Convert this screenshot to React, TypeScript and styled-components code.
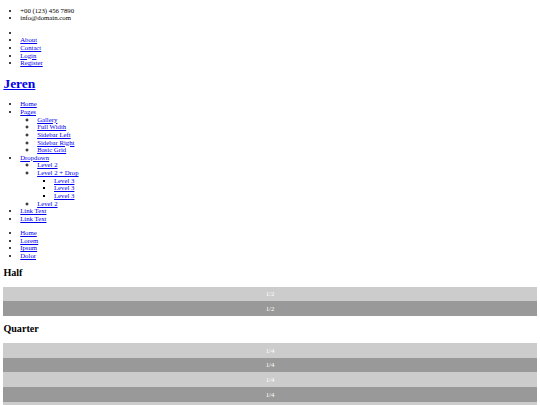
import React from "react";
import styled, { createGlobalStyle } from "styled-components";

const Global = createGlobalStyle`
  body {
    margin: 0 3.375px 3.375px;
    font-family: "Liberation Serif", "Times New Roman", serif;
    font-size: 6.75px;
    line-height: 7.62px;
    color: #000;
    background: #fff;
  }
`;

const List = styled.ul`
  margin: 6.75px 0;
  padding-left: 16.875px;
`;

const SubList = styled.ul<{ $marker: "circle" | "square" }>`
  margin: 0;
  padding-left: 16.875px;
  list-style-type: ${(p) => p.$marker};
`;

const Item = styled.li``;

const Link = styled.a`
  color: #0000ee;
  text-decoration: underline;
`;

const Brand = styled.h1`
  font-size: 13.5px;
  line-height: 15.5px;
  font-weight: bold;
  margin: 9.05px 0;
`;

const SectionTitle = styled.h2`
  font-size: 10.125px;
  line-height: 10.3px;
  font-weight: bold;
  margin: 8.4px 0;
`;

const Grid = styled.div`
  display: flex;
  flex-direction: column;
`;

const Cell = styled.div<{ $dark: boolean }>`
  background: ${(p) => (p.$dark ? "#999999" : "#cccccc")};
  color: #ffffff;
  text-align: center;
  padding: 3.45px 0;
  line-height: 7.76px;
`;

const navPages = ["Gallery", "Full Width", "Sidebar Left", "Sidebar Right", "Basic Grid"];

export default function App() {
  return (
    <>
      <Global />
      <List>
        <Item>+00 (123) 456 7890</Item>
        <Item>info@domain.com</Item>
      </List>
      <List>
        <Item></Item>
        <Item><Link href="#">About</Link></Item>
        <Item><Link href="#">Contact</Link></Item>
        <Item><Link href="#">Login</Link></Item>
        <Item><Link href="#">Register</Link></Item>
      </List>
      <Brand><Link href="#">Jeren</Link></Brand>
      <List>
        <Item><Link href="#">Home</Link></Item>
        <Item>
          <Link href="#">Pages</Link>
          <SubList $marker="circle">
            {navPages.map((p) => (
              <Item key={p}><Link href="#">{p}</Link></Item>
            ))}
          </SubList>
        </Item>
        <Item>
          <Link href="#">Dropdown</Link>
          <SubList $marker="circle">
            <Item><Link href="#">Level 2</Link></Item>
            <Item>
              <Link href="#">Level 2 + Drop</Link>
              <SubList $marker="square">
                <Item><Link href="#">Level 3</Link></Item>
                <Item><Link href="#">Level 3</Link></Item>
                <Item><Link href="#">Level 3</Link></Item>
              </SubList>
            </Item>
            <Item><Link href="#">Level 2</Link></Item>
          </SubList>
        </Item>
        <Item><Link href="#">Link Text</Link></Item>
        <Item><Link href="#">Link Text</Link></Item>
      </List>
      <List>
        <Item><Link href="#">Home</Link></Item>
        <Item><Link href="#">Lorem</Link></Item>
        <Item><Link href="#">Ipsum</Link></Item>
        <Item><Link href="#">Dolor</Link></Item>
      </List>
      <SectionTitle>Half</SectionTitle>
      <Grid>
        {["1/2", "1/2"].map((t, i) => (
          <Cell key={i} $dark={i % 2 === 1}>{t}</Cell>
        ))}
      </Grid>
      <SectionTitle>Quarter</SectionTitle>
      <Grid>
        {["1/4", "1/4", "1/4", "1/4", "1/4"].map((t, i) => (
          <Cell key={i} $dark={i % 2 === 1}>{t}</Cell>
        ))}
      </Grid>
    </>
  );
}
